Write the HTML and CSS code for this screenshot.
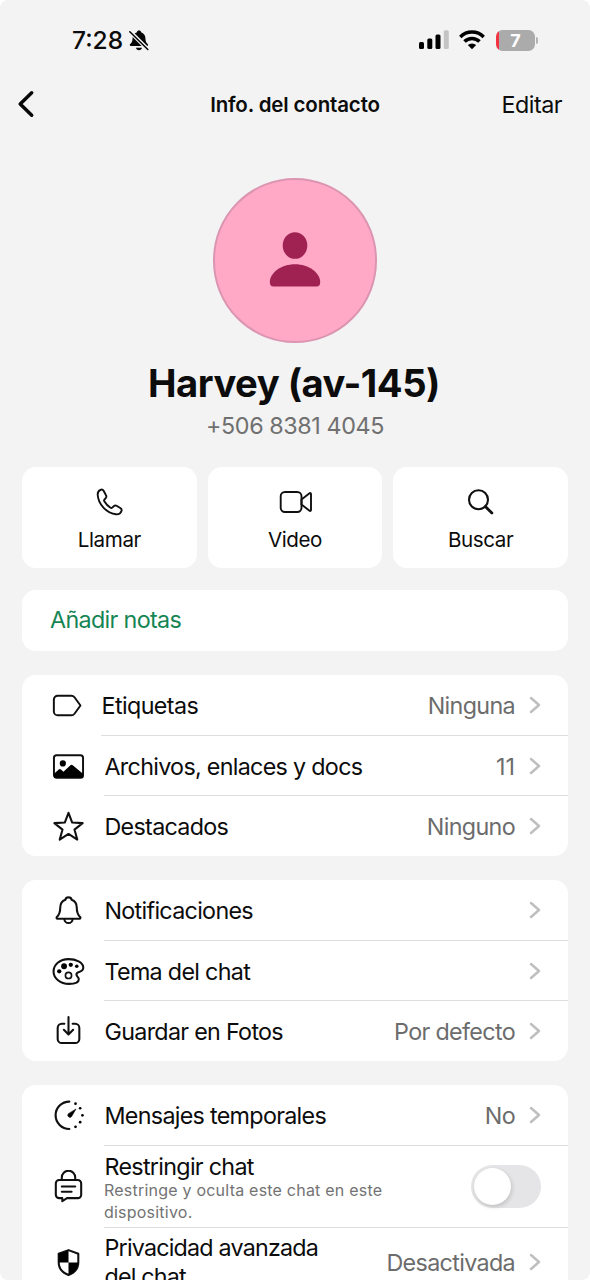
FILE: index.html
```html
<!DOCTYPE html>
<html lang="es">
<head>
<meta charset="utf-8">
<title>Info. del contacto</title>
<link rel="stylesheet" href="styles.css">
</head>
<body>
<svg class="sprite" aria-hidden="true">
  <symbol id="chevron" viewBox="0 0 12 18"><path d="M2 2l8 7-8 7" fill="none" stroke="#bfbfbf" stroke-width="2.5" stroke-linecap="round" stroke-linejoin="round"/></symbol>
</svg>
<main class="screen">
  <header class="status">
    <div class="status-left">
      <span class="clock">7:28</span>
      <svg class="mute" viewBox="0 0 20 21"><path d="M10 0.500c1.300 0 2 .7 2.100 1.700 2.600.9 4.200 3 4.300 5.800.1 3.500.7 4.700 2.300 6.100.7.600.5 2-.7 2H1.900c-1.200 0-1.400-1.300-.7-2 1.600-1.400 2.300-2.600 2.400-6.100.1-2.800 1.700-4.900 4.300-5.800C8 1.200 8.700.5 10 .5zM7 17.800h6c-.2 1.500-1.400 2.500-3 2.500s-2.800-1-3-2.500z" fill="#060606"/><path d="M.8 1.400l18 18" stroke="#f3f3f3" stroke-width="4"/><path d="M.8 1.700l18 17.800" stroke="#060606" stroke-width="1.500" stroke-linecap="round"/></svg>
    </div>
    <div class="status-right">
      <svg class="signal" viewBox="0 0 30 20"><rect x="0" y="12" width="5" height="7" rx="1.500"/><rect x="8.300" y="8.500" width="5" height="10.500" rx="1.500"/><rect x="16.500" y="4.500" width="5" height="14.500" rx="1.500"/><rect x="24.800" y="0.300" width="5" height="18.700" rx="1.500" fill="#c4c4c4"/></svg>
      <svg class="wifi" viewBox="0 0 26 20"><g fill="none" stroke="#000" stroke-width="3.500"><path d="M1.300 6.900a16.700 16.700 0 0 1 23.400 0"/><path d="M5.500 11.500a10.700 10.700 0 0 1 15 0"/></g><path d="M13 19.300l-4.200-4.200a6.100 6.100 0 0 1 8.400 0z"/></svg>
      <div class="battery"><span class="battery-body">7</span><span class="battery-tip"></span></div>
    </div>
  </header>
  <nav class="nav">
    <svg class="back" viewBox="0 0 18 28"><path d="M14.700 2.800L3.200 14l11.500 11.200" fill="none" stroke="#080808" stroke-width="3.500" stroke-linecap="round" stroke-linejoin="round"/></svg>
    <h1 class="nav-title">Info. del contacto</h1>
    <span class="edit">Editar</span>
  </nav>
  <section class="profile">
    <div class="avatar"><svg viewBox="0 0 52 56"><ellipse cx="26" cy="13.500" rx="12.300" ry="13.300"/><path d="M.8 50C.8 41 12 32.200 26 32.200S51.200 41 51.200 50c0 3-1.200 4.500-3.800 4.500H4.600C2 54.500.8 53 .8 50z"/></svg></div>
    <h2 class="name">Harvey (av-145)</h2>
    <p class="phone">+506 8381 4045</p>
  </section>
  <section class="actions">
    <div class="action"><svg class="action-icon" viewBox="0 0 34 30"><path d="M9.100 2.600c-2 .7-3.600 2.600-3.400 5.100C6.200 17.500 15 26.300 24 27.300c2.700.3 4.700-1 5.500-3.300.4-1.200.1-2-.9-2.700l-4-2.500c-1-.6-1.800-.5-2.600.2l-1.800 1.600c-.5.500-1 .5-1.700.1-2.800-1.700-4.700-3.800-6.200-6.400-.4-.7-.3-1.200.1-1.700l1.500-1.800c.6-.8.7-1.500.1-2.500l-2.400-4.500c-.6-1-1.400-1.500-2.500-1.200z" fill="none" stroke="#101010" stroke-width="1.900" stroke-linejoin="round"/></svg><span>Llamar</span></div>
    <div class="action"><svg class="action-icon" viewBox="-1.500 0 34 30"><g fill="none" stroke="#101010" stroke-width="1.900" stroke-linejoin="round"><rect x="1.200" y="5" width="20.800" height="20" rx="4.200"/><path d="M22 12.500l8-6.200c.7-.5 1.500-.2 1.500.7v16c0 .9-.8 1.200-1.500.7l-8-6.200z"/></g></svg><span>Video</span></div>
    <div class="action"><svg class="action-icon" viewBox="0.800 0 34 30"><g fill="none" stroke="#101010"><circle cx="15.300" cy="12.700" r="9.500" stroke-width="2.100"/><path d="M22.200 19.600l6.500 6.500" stroke-width="2.800" stroke-linecap="round"/></g></svg><span>Buscar</span></div>
  </section>
  <section class="card notes">Añadir notas</section>
  <section class="card list">
    <div class="row row-first-tag"><svg class="icon" viewBox="0 0 32 32"><path d="M5.500 6.500h13.200c1.300 0 2.300.5 3.100 1.500l5.800 8-5.800 8c-.8 1-1.800 1.500-3.100 1.500H5.500a3.700 3.700 0 0 1-3.700-3.700V10.200a3.700 3.700 0 0 1 3.700-3.700z" fill="none" stroke="#101010" stroke-width="1.900" stroke-linejoin="round"/></svg><div class="cell"><span class="label tags">Etiquetas</span><span class="value">Ninguna</span><svg class="chev"><use href="#chevron"/></svg></div></div>
    <div class="row"><svg class="icon" viewBox="0 0 32 32"><rect x="1.900" y="5.100" width="28.200" height="21.900" rx="2.500" fill="none" stroke="#101010" stroke-width="1.900"/><circle cx="10.500" cy="13" r="3"/><path d="M2 23l4.500-4c.8-.7 1.400-.7 2.200 0l2.400 2 6.500-6c1-.9 1.800-.9 2.800 0l9.600 8v4H2z"/></svg><div class="cell"><span class="label files">Archivos, enlaces y docs</span><span class="value count">11</span><svg class="chev"><use href="#chevron"/></svg></div></div>
    <div class="row"><svg class="icon" viewBox="0 0 32 32"><path d="M16 2.700l3.600 9.500 10.100.5-7.900 6.300 2.700 9.700L16 23.200l-8.500 5.500 2.700-9.700-7.900-6.300 10.100-.5z" fill="none" stroke="#101010" stroke-width="2" stroke-linejoin="round"/></svg><div class="cell"><span class="label">Destacados</span><span class="value">Ninguno</span><svg class="chev"><use href="#chevron"/></svg></div></div>
  </section>
  <section class="card list">
    <div class="row"><svg class="icon" viewBox="0 0 32 32"><g fill="none" stroke="#101010" stroke-width="2" stroke-linejoin="round"><path d="M16 3.300c1.800 0 2.800 1 3 2.300 3.400 1.300 5 4 5 7.400 0 5.200 1.200 7.300 3.300 9.300.6.700.3 1.700-.7 1.700H5.400c-1 0-1.300-1-.7-1.700C6.800 20.300 8 18.200 8 13c0-3.400 1.600-6.100 5-7.400.2-1.300 1.200-2.300 3-2.300z"/><path d="M12 24.200a4 4 0 0 0 8 0"/></g></svg><div class="cell"><span class="label">Notificaciones</span><svg class="chev"><use href="#chevron"/></svg></div></div>
    <div class="row"><svg class="icon" viewBox="0 0 32 32"><path d="M16 4C7.500 4 1.500 9.500 1.500 16S8 28 16.500 28c6 0 9.500-1.800 9.500-4.500 0-2-2.300-2.500-2.300-4.600 0-1.700 1.200-2.200 3.100-2.700 2.300-.7 3.700-2.200 3.500-4.500C29.900 7.200 23.500 4 16 4z" fill="none" stroke="#101010" stroke-width="2"/><circle cx="7" cy="15.800" r="2.100"/><circle cx="11.700" cy="10.900" r="2.800"/><circle cx="18.200" cy="9.500" r="2.100"/><circle cx="24" cy="10.900" r="1.700"/><circle cx="16" cy="19.800" r="3" fill="none" stroke="#101010" stroke-width="1.600"/></svg><div class="cell"><span class="label">Tema del chat</span><svg class="chev"><use href="#chevron"/></svg></div></div>
    <div class="row"><svg class="icon" viewBox="0 0 32 32"><g fill="none" stroke="#101010" stroke-width="2" stroke-linecap="round" stroke-linejoin="round"><path d="M12 9.500H9.500a4 4 0 0 0-4 4v10.700a4 4 0 0 0 4 4h13a4 4 0 0 0 4-4V13.500a4 4 0 0 0-4-4H20"/><path d="M16 3v16.500M11.500 15.300l4.500 4.500 4.500-4.500"/></g></svg><div class="cell"><span class="label">Guardar en Fotos</span><span class="value">Por defecto</span><svg class="chev"><use href="#chevron"/></svg></div></div>
  </section>
  <section class="card list card-last">
    <div class="row"><svg class="icon" viewBox="0 0 32 32"><path d="M16.800 2.500a13.300 13.300 0 1 0 0 26.600" fill="none" stroke="#101010" stroke-width="2.100" stroke-linecap="round"/><circle cx="22.800" cy="4.500" r="1.300"/><circle cx="27.300" cy="9" r="1.300"/><circle cx="29.500" cy="15.800" r="1.300"/><circle cx="27.300" cy="22.500" r="1.300"/><circle cx="22.800" cy="27" r="1.300"/><path d="M23.300 9.700l-4.400 7.400a2 2 0 1 1-3-2.900z" stroke="#101010" stroke-width=".6" stroke-linejoin="round"/></svg><div class="cell"><span class="label">Mensajes temporales</span><span class="value">No</span><svg class="chev"><use href="#chevron"/></svg></div></div>
    <div class="row row-lock"><svg class="icon" viewBox="0 0 32 32"><g fill="none" stroke="#101010" stroke-width="2" stroke-linecap="round" stroke-linejoin="round"><path d="M9.500 9.700V7.200a6.500 6.500 0 0 1 13 0v2.500"/><path d="M7 9.700h18a3.300 3.300 0 0 1 3.300 3.300v11a3.300 3.300 0 0 1-3.300 3.300H14.500L10 30.300v-3H7A3.300 3.300 0 0 1 3.700 24V13A3.300 3.300 0 0 1 7 9.700zM9.500 16h13M9.500 21h9.500"/></g></svg><div class="cell"><div class="text"><span class="label">Restringir chat</span><p class="hint">Restringe y oculta este chat en este dispositivo.</p></div><span class="toggle"><span class="knob"></span></span></div></div>
    <div class="row row-privacy"><svg class="icon" viewBox="0 0 32 32"><path d="M16 4l9.500 3.500V16c0 6-3.500 9.800-9.500 12.200C10 25.800 6.500 22 6.500 16V7.500z" fill="#fff" stroke="#101010" stroke-width="2" stroke-linejoin="round"/><path d="M16 4L6.500 7.500V16H16zM16 16h9.500c0 6-3.500 9.800-9.500 12.200z"/></svg><div class="cell"><span class="label">Privacidad avanzada<br>del chat</span><span class="value">Desactivada</span><svg class="chev"><use href="#chevron"/></svg></div></div>
  </section>
</main>
</body>
</html>
```
FILE: styles.css
```css
* { box-sizing: border-box; }
body { margin: 0; background: #fff; font-family: Inter, "Liberation Sans", sans-serif; color: #0c0c0c; }
h1, h2, p { margin: 0; }
.sprite { display: none; }
.screen { width: 590px; height: 1280px; overflow: hidden; background: #f3f3f3; border-radius: 8px; padding: 0 22px; display: flex; flex-direction: column; }
.status { flex: none; height: 80px; display: flex; justify-content: space-between; padding: 0 30px 0 50px; align-items: center; }
.status-left, .status-right { display: flex; align-items: center; }
.clock { font-size: 24.5px; font-weight: 500; letter-spacing: 0; line-height: 30px; }
.mute { width: 20px; height: 21px; margin-left: 6px; }
.signal { width: 30px; height: 20px; margin-right: 10px; }
.wifi { width: 26px; height: 20px; margin-right: 11px; }
.battery { display: flex; align-items: center; gap: 1px; }
.battery-body { width: 39px; height: 21px; border-radius: 6.5px; background: linear-gradient(90deg, #f3333f 3px, #ababab 3px); color: #fff; font-size: 18px; font-weight: 700; line-height: 21px; text-align: center; }
.battery-tip { width: 2px; height: 7px; border-radius: 0 2px 2px 0; background: #b3b3b3; }
.nav { flex: none; height: 48px; display: grid; grid-template-columns: 90px 1fr 90px; align-items: center; margin: 0 6px 0 -5px; }
.back { width: 18px; height: 28px; }
.nav-title { font-size: 20.5px; font-weight: 600; text-align: center; letter-spacing: -0.15px; padding-left: 11px; }
.edit { font-size: 23.3px; text-align: right; letter-spacing: -0.5px; }
.profile { flex: none; display: flex; flex-direction: column; align-items: center; padding-top: 50px; }
.avatar { width: 164.6px; height: 164.6px; border-radius: 50%; background: #ffa9c7; border: 2px solid #dc95b0; display: flex; align-items: center; justify-content: center; }
.avatar svg { width: 52px; height: 56px; fill: #a02252; }
.name { font-size: 38.2px; font-weight: 700; line-height: 48px; margin-top: 16px; margin-right: 2px; letter-spacing: -0.5px; white-space: nowrap; }
.phone { font-size: 23.3px; line-height: 30px; margin-top: 4.4px; letter-spacing: -0.4px; color: #707070; white-space: nowrap; }
.actions { flex: none; display: grid; grid-template-columns: repeat(3, 1fr); gap: 11px; margin-top: 25.7px; height: 101.5px; }
.action { background: #fff; border-radius: 14px; display: flex; flex-direction: column; align-items: center; padding-top: 20px; font-size: 20.6px; line-height: 26px; letter-spacing: -0.4px; gap: 10px; }
.action-icon { width: 34px; height: 30px; }
.card { flex: none; background: #fff; border-radius: 14px; margin-top: 24px; }
.notes { margin-top: 22px; height: 60.6px; padding-left: 28px; font-size: 23.3px; line-height: 60px; letter-spacing: -0.66px; color: #168554; }
.list { padding-top: 1px; }
.row { height: 60.3px; display: flex; align-items: center; padding-left: 30px; }
.row:last-child { height: 59.3px; }
.icon { width: 33px; height: 33px; flex: none; }
.cell { flex: 1; margin-left: 19px; height: 100%; display: flex; align-items: center; padding-right: 27px; border-bottom: 1px solid #dedede; }
.row-first-tag .cell { margin-left: 16px; }
.row:last-child .cell { border-bottom: 0; }
.label { font-size: 23.3px; line-height: 28px; margin-left: 0.5px; padding-top: 2px; letter-spacing: -0.7px; white-space: nowrap; }
.tags { letter-spacing: -0.6px; }
.value { margin-left: auto; font-size: 23.3px; padding-top: 1px; letter-spacing: -0.65px; color: #6c6c6c; white-space: nowrap; }
.count { letter-spacing: 0; }
.chev { width: 12px; height: 18px; margin-left: 14px; flex: none; }
.label + .chev { margin-left: auto; }
.card-last { border-radius: 14px 14px 0 0; }
.row-lock { height: 81.7px; }
.text { width: 310px; }
.text .label { display: block; padding-top: 4px; line-height: 26px; }
.hint { font-size: 16px; line-height: 22px; margin-top: -1px; color: #737373; letter-spacing: 0.22px; }
.toggle { margin-left: auto; width: 70px; height: 43px; border-radius: 22px; background: #e5e5e7; padding: 3px; }
.knob { display: block; width: 37px; height: 37px; border-radius: 50%; background: #fff; box-shadow: 1px 2px 4px rgba(0, 0, 0, 0.16); }
.row.row-privacy { height: 69px; }
.row-privacy .label { line-height: 29px; padding-top: 0; letter-spacing: -0.8px; }
```
